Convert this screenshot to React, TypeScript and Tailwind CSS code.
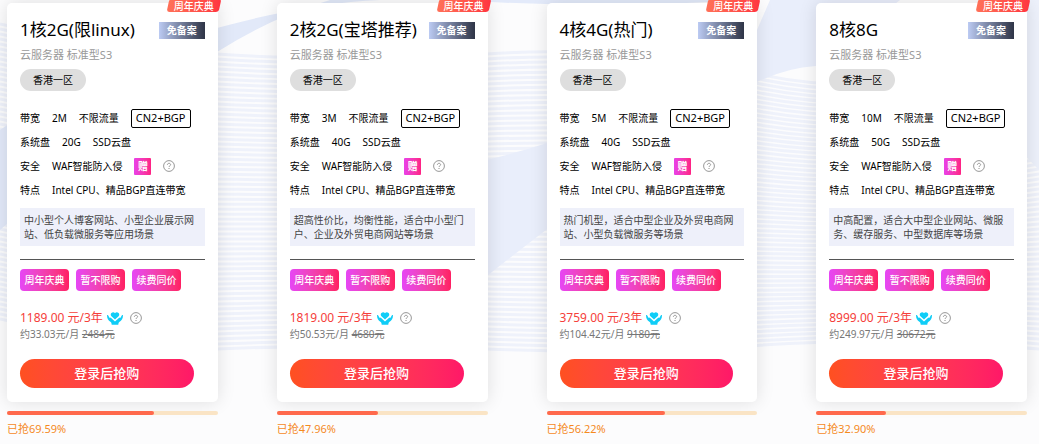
const FONT = "font-['Noto_Sans','Noto_Sans_CJK_SC',sans-serif]";

const plans = [
  {
    name: "1核2G(限linux)",
    bandwidth: "2M",
    disk: "20G",
    desc: "中小型个人博客网站、小型企业展示网站、低负载微服务等应用场景",
    price: "1189.00",
    monthly: "33.03",
    original: "2484",
    sold: "69.59%",
  },
  {
    name: "2核2G(宝塔推荐)",
    bandwidth: "3M",
    disk: "40G",
    desc: "超高性价比，均衡性能，适合中小型门户、企业及外贸电商网站等场景",
    price: "1819.00",
    monthly: "50.53",
    original: "4680",
    sold: "47.96%",
  },
  {
    name: "4核4G(热门)",
    bandwidth: "5M",
    disk: "40G",
    desc: "热门机型，适合中型企业及外贸电商网站、小型负载微服务等场景",
    price: "3759.00",
    monthly: "104.42",
    original: "9180",
    sold: "56.22%",
  },
  {
    name: "8核8G",
    bandwidth: "10M",
    disk: "50G",
    desc: "中高配置，适合大中型企业网站、微服务、缓存服务、中型数据库等场景",
    price: "8999.00",
    monthly: "249.97",
    original: "30672",
    sold: "32.90%",
  },
];

const tags = ["周年庆典", "暂不限购", "续费同价"];

const HelpIcon = () => (
  <svg viewBox="0 0 12 12" className="h-3 w-3 shrink-0" fill="none" stroke="#8c8c8c">
    <circle cx="6" cy="6" r="5.4" strokeWidth="0.9" />
    <path d="M4.4 4.9c0-1 .7-1.6 1.6-1.6s1.6.6 1.6 1.4c0 1.1-1.6 1.2-1.6 2.3" strokeWidth="0.9" />
    <path d="M6 8v1" strokeWidth="1" />
  </svg>
);

const HandsIcon = () => (
  <svg viewBox="0 0 16 13" className="h-[13px] w-4 shrink-0" fill="#0fcdf7">
    <path d="M8 7.6 4.4 4.3C3.2 3 3.600.8 5.500.4 6.600.200 7.500.6 8 1.300 8.500.6 9.400.200 10.500.4c1.900.400 2.300 2.600 1.100 3.900z" />
    <path d="M0 3C1 3 1.600 3.600 1.900 4.800L2.800 6 3.600 5.600 8 9.600 12.400 5.600 13.200 6 14.100 4.800C14.400 3.600 15 3 16 3 16 6.600 14.800 8.700 12.300 9.900 11.600 10.300 11.400 11.500 11.300 12.800H4.700C4.600 11.500 4.400 10.300 3.700 9.900 1.200 8.700 0 6.600 0 3z" />
  </svg>
);

// soft ribbons and hairline waves behind the cards
const Waves = () => (
  <svg
    viewBox="0 0 1039 444"
    preserveAspectRatio="none"
    className="absolute inset-0 h-full w-full"
    aria-hidden="true"
  >
    {Array.from({ length: 60 }, (_, i) => {
      const y = 54 + i * 5;
      return (
        <path
          key={i}
          d={`M0 ${y - 30}Q110 ${y - 5} 217 ${y}Q350 ${y + 9 - i * 0.25} 487 ${y}T757 ${y + 20 - i * 0.4}T1039 ${y}`}
          fill="none"
          stroke="#eff2fb"
          strokeWidth="3"
        />
      );
    })}
    <path d="M0 130Q100 60 217 28T420 0H330Q270 18 217 52T0 230z" fill="#e2e9f9" />
    <path d="M460 0H740Q600 10 460 0z" fill="#e3eafa" />
    <path d="M770 0H900L816 66Q786 68 757 82Q620 170 487 276V160Q650 120 757 30z" fill="#e9eefb" />
    <path d="M1000 0H1039V170Q1000 130 960 80z" fill="#edf1fb" />
  </svg>
);

const PlanCard = ({ plan }: { plan: (typeof plans)[number] }) => {
  return (
    <div>
      <div className="relative rounded-[5px] bg-white px-[13px] pt-4 pb-[14px] shadow-[0_0_18px_rgba(0,0,0,0.12)]">
        {/* Ribbon */}
        <div className="absolute -top-1 -right-[2px] flex h-[13px] w-[52px] items-center justify-center">
          <span className="absolute inset-0 -skew-x-12 rounded-[3px] bg-gradient-to-r from-[#ff7058] to-[#ff3540]"></span>
          <span className="relative text-[10px] leading-none font-medium text-white">周年庆典</span>
        </div>

        <div className="flex h-[22px] items-center justify-between">
          <h2 className="text-[17px] leading-[22px] whitespace-nowrap text-black">{plan.name}</h2>
          <span className="flex h-[17px] w-[46px] items-center justify-center bg-gradient-to-r from-[#bccbf3] to-[#2f3547] text-[10px] font-bold text-white">
            免备案
          </span>
        </div>
        <p className="mt-[6px] text-[11px] leading-4 text-[#999]">云服务器 标准型S3</p>
        <span className="mt-[6px] flex h-[22px] w-[66px] items-center justify-center rounded-full bg-[#dedede] text-[10px] text-black">
          香港一区
        </span>

        {/* Specs */}
        <div className="mt-[15px] text-[10px] whitespace-nowrap text-black">
          <div className="flex h-6 items-center gap-3">
            <span>带宽</span>
            <span>{plan.bandwidth}</span>
            <span>不限流量</span>
            <span className="flex h-[19px] items-center rounded-[2px] border border-black px-1 text-[11px]">
              CN2+BGP
            </span>
          </div>
          <div className="flex h-6 items-center gap-3">
            <span>系统盘</span>
            <span>{plan.disk}</span>
            <span>SSD云盘</span>
          </div>
          <div className="flex h-6 items-center gap-3">
            <span>安全</span>
            <span>WAF智能防入侵</span>
            <span className="flex h-[17px] w-[17px] items-center justify-center rounded-[1px] bg-gradient-to-r from-[#e93fe8] to-[#ff2183] font-bold text-white">
              赠
            </span>
            <HelpIcon />
          </div>
          <div className="flex h-6 items-center gap-3">
            <span>特点</span>
            <span>Intel CPU、精品BGP直连带宽</span>
          </div>
        </div>

        <p className="mt-[6px] bg-[#eef0fa] px-1 py-[5px] text-[10px] leading-[14px] text-[#444]">
          {plan.desc}
        </p>
        <hr className="mt-[13px] border-t border-[#555]" />

        <div className="mt-[9px] flex gap-[7px]">
          {tags.map((tag) => (
            <span
              key={tag}
              className="flex h-[22px] w-[49px] items-center justify-center rounded bg-gradient-to-r from-[#e646f5] to-[#ff1f62] text-[10px] font-medium whitespace-nowrap text-white"
            >
              {tag}
            </span>
          ))}
        </div>

        {/* Price */}
        <div className="mt-[18px] flex h-[18px] items-center text-[12px] text-[#f5403a]">
          <span>{plan.price} 元/3年</span>
          <span className="ml-1 flex items-center gap-[7px]">
            <HandsIcon />
            <HelpIcon />
          </span>
        </div>
        <p className="text-[10px] leading-[14px] text-[#777]">
          约{plan.monthly}元/月 <del>{plan.original}元</del>
        </p>
        <button
          type="button"
          className="mt-[18px] flex h-[29px] w-[calc(100%-11px)] items-center justify-center rounded-full bg-gradient-to-r from-[#ff5020] to-[#ff1768] text-[13px] font-medium text-white"
        >
          登录后抢购
        </button>
      </div>

      {/* Sold progress */}
      <div className="relative mt-[9px] h-1 rounded-full bg-[#fae4c5]">
        <div className="h-1 rounded-full bg-[#ff694c]" style={{ width: plan.sold }}></div>
      </div>
      <p className="relative mt-[6px] text-[11px] leading-4 text-[#f58a1f]">已抢{plan.sold}</p>
    </div>
  );
};

const App = () => {
  return (
    <main className={`relative min-h-screen overflow-hidden bg-[#fcfcfd] ${FONT}`}>
      <Waves />
      <div className="relative grid grid-cols-4 gap-[59px] pt-[3px] pr-3 pb-1 pl-[7px]">
        {plans.map((plan) => (
          <PlanCard key={plan.name} plan={plan} />
        ))}
      </div>
    </main>
  );
};

export default App;
